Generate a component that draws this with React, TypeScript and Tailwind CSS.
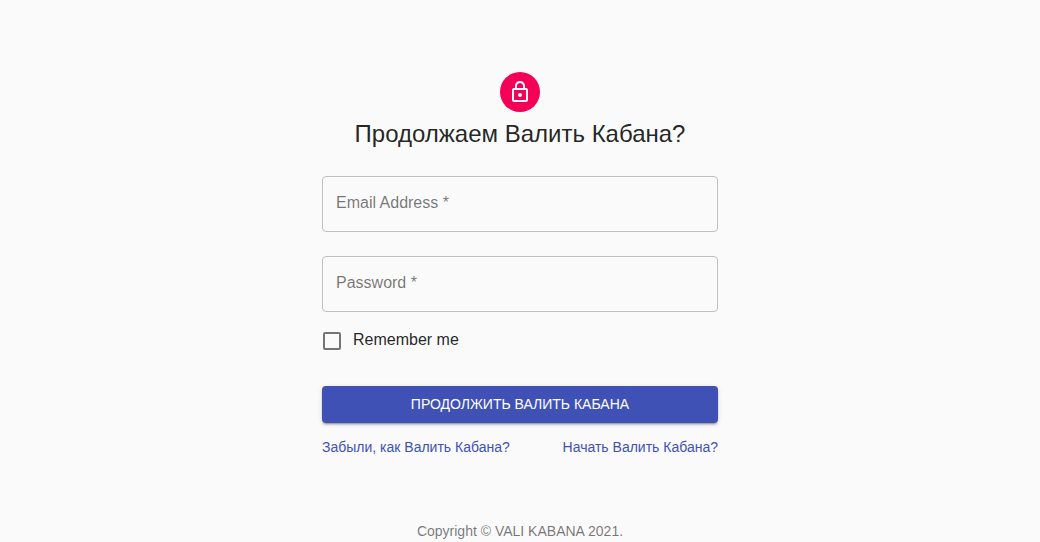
import { useState } from "react";

function Field({ id, label, type }: { id: string; label: string; type: string }) {
  return (
    <div className="relative">
      <input
        id={id}
        type={type}
        required
        placeholder=" "
        className="peer block h-14 w-full rounded border border-[#c0c0c0] bg-transparent px-[13px] text-base text-black/87 outline-none hover:border-black/87 focus:border-[#3f51b5]"
      />
      <label
        htmlFor={id}
        className="pointer-events-none absolute top-4 left-[14px] bg-[#fafafa] text-base leading-[22px] text-black/54 peer-focus:-top-2 peer-focus:text-xs peer-[:not(:placeholder-shown)]:-top-2 peer-[:not(:placeholder-shown)]:text-xs"
      >
        {label} *
      </label>
    </div>
  );
}

export default function App() {
  const [remember, setRemember] = useState(false);
  return (
    <div className="min-h-screen bg-[#fafafa] font-['Liberation_Sans',sans-serif] text-black/87">
      <main className="mx-auto flex max-w-[444px] flex-col items-center px-6 pt-[72px]">
        <div className="flex size-10 items-center justify-center rounded-full bg-[#f50057]">
          <svg viewBox="0 0 24 24" className="size-6 fill-[#fafafa]" aria-hidden="true">
            <path d="M12 17c1.1 0 2-.9 2-2s-.9-2-2-2-2 .9-2 2 .9 2 2 2zm6-9h-1V6c0-2.76-2.24-5-5-5S7 3.24 7 6v2H6c-1.1 0-2 .9-2 2v10c0 1.1.9 2 2 2h12c1.1 0 2-.9 2-2V10c0-1.1-.9-2-2-2zM8.9 6c0-1.71 1.39-3.1 3.1-3.1s3.1 1.39 3.1 3.1v2H8.9V6zM18 20H6V10h12v10z" />
          </svg>
        </div>
        <h1 className="mt-[6px] text-2xl leading-8">Продолжаем Валить Кабана?</h1>
        <form className="mt-[26px] w-full" onSubmit={(e) => e.preventDefault()}>
          <div className="flex flex-col gap-6">
            <Field id="email" label="Email Address" type="email" />
            <Field id="password" label="Password" type="password" />
          </div>
          <label className="mt-4 flex w-fit items-center gap-3 text-base leading-6">
            <input
              type="checkbox"
              checked={remember}
              onChange={(e) => setRemember(e.target.checked)}
              className="mt-[2px] ml-px size-[18px] appearance-none rounded-xs border-2 border-[#757575] checked:border-[#f50057] checked:bg-[#f50057]"
            />
            Remember me
          </label>
          <button
            type="submit"
            className="mt-[34px] flex h-[37px] w-full items-center justify-center rounded bg-[#3f51b5] pb-[2px] text-sm text-white uppercase shadow-[0_3px_1px_-2px_rgba(0,0,0,0.2),0_2px_2px_0_rgba(0,0,0,0.14),0_1px_5px_0_rgba(0,0,0,0.12)]"
          >
            Продолжить Валить Кабана
          </button>
          <div className="mt-[14px] flex justify-between text-sm text-[#3f51b5]">
            <a href="#forgot" className="hover:underline">Забыли, как Валить Кабана?</a>
            <a href="#start" className="hover:underline">Начать Валить Кабана?</a>
          </div>
        </form>
        <p className="mt-16 text-sm text-black/54">Copyright © VALI KABANA 2021.</p>
      </main>
    </div>
  );
}
